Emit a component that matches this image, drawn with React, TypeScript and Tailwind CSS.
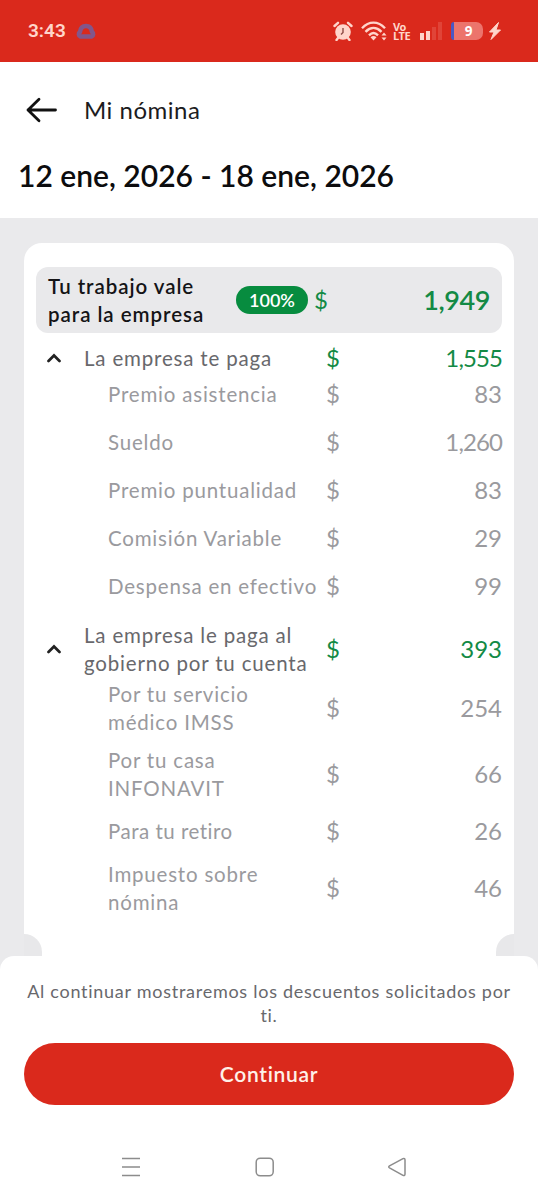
import clsx from 'clsx';

type Linea = { label: string; monto: string; alto: string; className?: string };

const PAGOS: Linea[] = [
  { label: 'Premio asistencia', monto: '83', alto: 'h-12' },
  { label: 'Sueldo', monto: '1,260', alto: 'h-12' },
  { label: 'Premio puntualidad', monto: '83', alto: 'h-12' },
  { label: 'Comisión Variable', monto: '29', alto: 'h-12' },
  { label: 'Despensa en efectivo', monto: '99', alto: 'h-12' },
];

const GOBIERNO: Linea[] = [
  { label: 'Por tu servicio\nmédico IMSS', monto: '254', alto: 'h-[66px]' },
  { label: 'Por tu casa\nINFONAVIT', monto: '66', alto: 'h-[66px]' },
  { label: 'Para tu retiro', monto: '26', alto: 'h-[47px]', className: 'tracking-[0.5px]' },
  { label: 'Impuesto sobre\nnómina', monto: '46', alto: 'h-[67px]' },
];

export default function App() {
  return (
    <div className="flex h-[1200px] w-[538px] flex-col overflow-hidden bg-[#eaeaec] font-['Lato',sans-serif]">
      <StatusBar />

      <header className="h-[156px] shrink-0 bg-white">
        <div className="flex h-24 items-center pl-[26px]">
          <svg width="32" height="26" viewBox="0 0 32 26" fill="none" stroke="#111" strokeWidth="2.8" strokeLinecap="round" strokeLinejoin="round">
            <path d="M29.5 13H2M13 2.2L2 13l11 10.8" />
          </svg>
          <span className="ml-[26px] text-[24px] leading-8 tracking-[0.5px] text-[#1c1c1e]">Mi nómina</span>
        </div>
        <h1 className="-mt-px pl-[18px] text-[30px] leading-9 font-semibold text-[#0c0c0e]">12 ene, 2026 - 18 ene, 2026</h1>
      </header>

      <main className="relative mx-6 mt-[25px] h-[713px] shrink-0 rounded-t-[18px] bg-white px-3 pt-6">
        <div className="flex h-[66px] items-center rounded-xl bg-[#e9e9eb] px-3">
          <div className="w-[188px] pb-px text-[20.5px] leading-7 font-semibold tracking-[0.95px] whitespace-pre text-[#141416]">
            {'Tu trabajo vale\npara la empresa'}
          </div>
          <span className="flex h-7 w-[72px] items-center justify-center rounded-full bg-[#078c3f] text-[18px] font-semibold text-white">100%</span>
          <span className="ml-[6px] text-[24px] text-[#138a45]">$</span>
          <span className="ml-auto text-[27px] font-semibold tracking-[-0.4px] text-[#138a45]">1,949</span>
        </div>

        <Grupo label="La empresa te paga" monto="1,555" className="mt-3 h-[26px]" />
        <div className="-mt-px">
          {PAGOS.map((l) => <Fila key={l.label} {...l} />)}
        </div>

        <Grupo label={'La empresa le paga al\ngobierno por tu cuenta'} monto="393" className="mt-3 h-[54px]" />
        <div className="-mt-px">
          {GOBIERNO.map((l) => <Fila key={l.label} {...l} />)}
        </div>

        {/* muescas del recibo */}
        <div className="absolute bottom-0 left-0 h-[22px] w-[18px] rounded-tr-[18px] bg-[#e8e8ea]" />
        <div className="absolute right-0 bottom-0 h-[22px] w-[18px] rounded-tl-[18px] bg-[#e8e8ea]" />
      </main>

      <footer className="flex flex-1 flex-col rounded-t-[14px] bg-white px-6 pt-[23px]">
        <p className="text-center text-[18px] leading-6 tracking-[0.73px] whitespace-pre text-[#68686c]">
          {'Al continuar mostraremos los descuentos solicitados por\nti.'}
        </p>
        <button className="mt-4 h-[62px] shrink-0 rounded-full bg-[#da291c] text-[21px] font-semibold tracking-[0.7px] text-[#fff0e8]">
          Continuar
        </button>
        <NavBar />
      </footer>
    </div>
  );
}

function Monto({ children }: { children: string }) {
  return (
    <span className={clsx('ml-auto text-[24px] leading-7', children.length > 3 && 'tracking-[-0.9px]')}>
      {children}
    </span>
  );
}

function Grupo({ label, monto, className }: { label: string; monto: string; className: string }) {
  return (
    <div className={clsx('flex items-center pl-[11px]', className)}>
      <svg width="14" height="10" viewBox="0 0 14 10" fill="none" stroke="#222" strokeWidth="2.7" strokeLinecap="round">
        <path d="M1.5 8L7 2.5 12.5 8" />
      </svg>
      <div className="ml-[23px] w-[242px] text-[20.5px] leading-7 tracking-[0.82px] whitespace-pre text-[#68686c]">{label}</div>
      <span className="text-[24px] leading-7 text-[#138a45]">$</span>
      <div className="ml-auto text-[#138a45]"><Monto>{monto}</Monto></div>
    </div>
  );
}

function Fila({ label, monto, alto, className = 'tracking-[0.8px]' }: Linea) {
  return (
    <div className={clsx('flex items-center pl-[72px] text-[#9a9a9e]', alto)}>
      <div className={clsx('w-[218px] text-[20.5px] leading-7 whitespace-pre', className)}>{label}</div>
      <span className="text-[24px] leading-7">$</span>
      <Monto>{monto}</Monto>
    </div>
  );
}

function StatusBar() {
  return (
    <div className="flex h-[62px] shrink-0 items-center bg-[#da291c] pl-7 text-[#ffd5cb]">
      <span className="w-[48px] font-['Roboto',sans-serif] text-[19px] font-semibold">3:43</span>
      <svg width="20" height="18" viewBox="0 0 20 18" fill="none" stroke="#82568a" strokeWidth="4.5" strokeLinejoin="round">
        <path d="M4.500 14.500a2.500 2.500 0 0 1-.5-4.500C4.500 6 7 4 10 4s5.500 2 6 6a2.500 2.500 0 0 1-.5 4.500z" />
      </svg>
      {/* alarma */}
      <svg className="ml-[237px]" width="20" height="20" viewBox="0 0 20 20">
        <circle cx="10" cy="11" r="7.8" fill="currentColor" />
        <path d="M1.5 5L5 1.800M18.500 5L15 1.800M5 17l-1.500 2M15 17l1.500 2" stroke="currentColor" strokeWidth="2.4" strokeLinecap="round" />
        <path d="M10 7v4.500l-2 2" fill="none" stroke="#8d4b45" strokeWidth="1.4" />
      </svg>
      {/* wifi */}
      <svg className="ml-2" width="26" height="20" viewBox="0 0 26 20" fill="none" stroke="currentColor" strokeWidth="2.4">
        <path d="M1 7.200C8-.2 17-.2 24 7.200M4.500 10.800c5-5 11-5 16 0M8 14.300c3-3 6-3 9 0" />
        <path d="M9.500 16.200c2-1.600 4-1.600 6 0l-3 3.300z" fill="currentColor" stroke="none" />
        <path d="M20.500 14.500l2.500-3 2.500 3zM20.500 16.500l2.500 3 2.500-3z" fill="currentColor" stroke="none" />
      </svg>
      <span className="ml-[6px] w-[18px] font-['Open_Sans',sans-serif] text-[11px] leading-[9.5px] font-bold tracking-[-0.6px] whitespace-pre">{'Vo\nLTE'}</span>
      {/* señal */}
      <svg className="ml-[9px]" width="23" height="20" viewBox="0 0 23 20" fill="currentColor">
        <path d="M0 12h4v7H0zM6 10h4v9H6z" />
        <path d="M12 6h4v13h-4zM18 1h4v18h-4z" opacity=".16" />
      </svg>
      {/* batería */}
      <div className="ml-2 flex h-[18px] w-[32px] items-center justify-center rounded-l-[3px] rounded-r-[7px] border-l-[3px] border-[#4a58c4] bg-[#ec746c] font-['Open_Sans',sans-serif] text-[13.5px] font-bold text-white">9</div>
      <svg className="ml-[6px]" width="12" height="18" viewBox="0 0 12 18" fill="currentColor">
        <path d="M9.500.5L.5 10H5L2 17.500 11.500 8H7z" stroke="currentColor" strokeLinejoin="round" />
      </svg>
    </div>
  );
}

function NavBar() {
  return (
    <nav className="mt-[52px] flex items-center pl-[97px] text-[#8c8c8c]">
      <svg width="20" height="20" viewBox="0 0 20 20" stroke="currentColor" strokeWidth="1.5">
        <path d="M1 1.500h18M1 10h18M1 18.500h18" />
      </svg>
      <svg className="ml-[114px]" width="20" height="20" viewBox="0 0 20 20" fill="none" stroke="currentColor" strokeWidth="1.5">
        <rect x="1.2" y="1.2" width="17" height="17.6" rx="4" />
      </svg>
      <svg className="ml-[112px]" width="20" height="20" viewBox="0 0 20 20" fill="none" stroke="currentColor" strokeWidth="1.5" strokeLinejoin="round">
        <path d="M16 1.600L2.500 8.900q-1.500 1 0 2L16 18.400q2 .6 2-1.400V3q0-2-2-1.400z" />
      </svg>
    </nav>
  );
}
